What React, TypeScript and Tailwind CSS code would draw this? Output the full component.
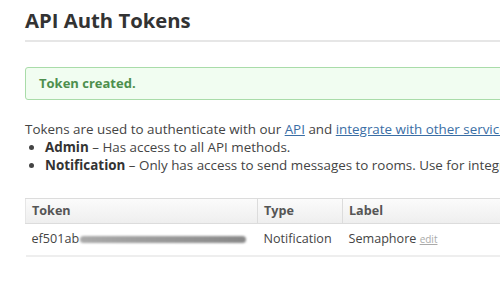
import React from 'react';

function App() {
  return (
    <div className="w-[500px] h-[281px] overflow-hidden bg-white" style={{ fontFamily: '"Open Sans", "DejaVu Sans", sans-serif' }}>
      <div className="w-[700px] pl-[25px] pt-[6px] text-[#444]">
        <h1 className="text-[20.3px] font-bold text-[#333] leading-[28px] pb-[6px] border-b-2 border-[#e6e6e6]">API Auth Tokens</h1>

        <div className="mt-[25px] h-[33px] flex items-center pl-[13px] rounded-[3px] border border-[#a9dca9] bg-[#f1fdf1] text-[13px] font-bold text-[#4d8f4d]">
          Token created.
        </div>

        <p className="mt-[20px] text-[13.4px] leading-[18px]">
          Tokens are used to authenticate with our <a className="text-[#3a6ea5] underline">API</a> and{' '}
          <a className="text-[#3a6ea5] underline">integrate with other services</a>.
        </p>
        <ul className="text-[13.4px] leading-[18px] list-disc pl-[20px]">
          <li>
            <b className="text-[#333]">Admin</b> – Has access to all API methods.
          </li>
          <li>
            <b className="text-[#333]">Notification</b> – Only has access to send messages to rooms. Use for integrations.
          </li>
        </ul>

        <table className="mt-[24px] w-full text-[12.6px] border-collapse">
          <thead>
            <tr className="bg-gradient-to-b from-[#fbfbfb] to-[#eeeeee] h-[25px] text-left text-[#555]">
              <th className="w-[232px] pl-[6px] font-bold border border-[#dcdcdc] border-l-[#e6e6e6]">Token</th>
              <th className="w-[85px] pl-[6px] font-bold border border-[#dcdcdc]">Type</th>
              <th className="pl-[6px] font-bold border border-[#dcdcdc]">Label</th>
            </tr>
          </thead>
          <tbody>
            <tr className="h-[32px] border-b-2 border-[#eeeeee]">
              <td className="pl-[6px]">
                <div className="flex items-center">
                  <span>ef501ab</span>
                  <span className="ml-[1px] h-[7px] w-[166px] rounded-full bg-gradient-to-r from-[#aaa] via-[#999] to-[#888] blur-[1.2px]"></span>
                </div>
              </td>
              <td className="pl-[6px]">Notification</td>
              <td className="pl-[6px]">
                Semaphore <a className="text-[10px] text-[#aaa] underline">edit</a>
              </td>
            </tr>
          </tbody>
        </table>
      </div>
    </div>
  );
}

export default App;
